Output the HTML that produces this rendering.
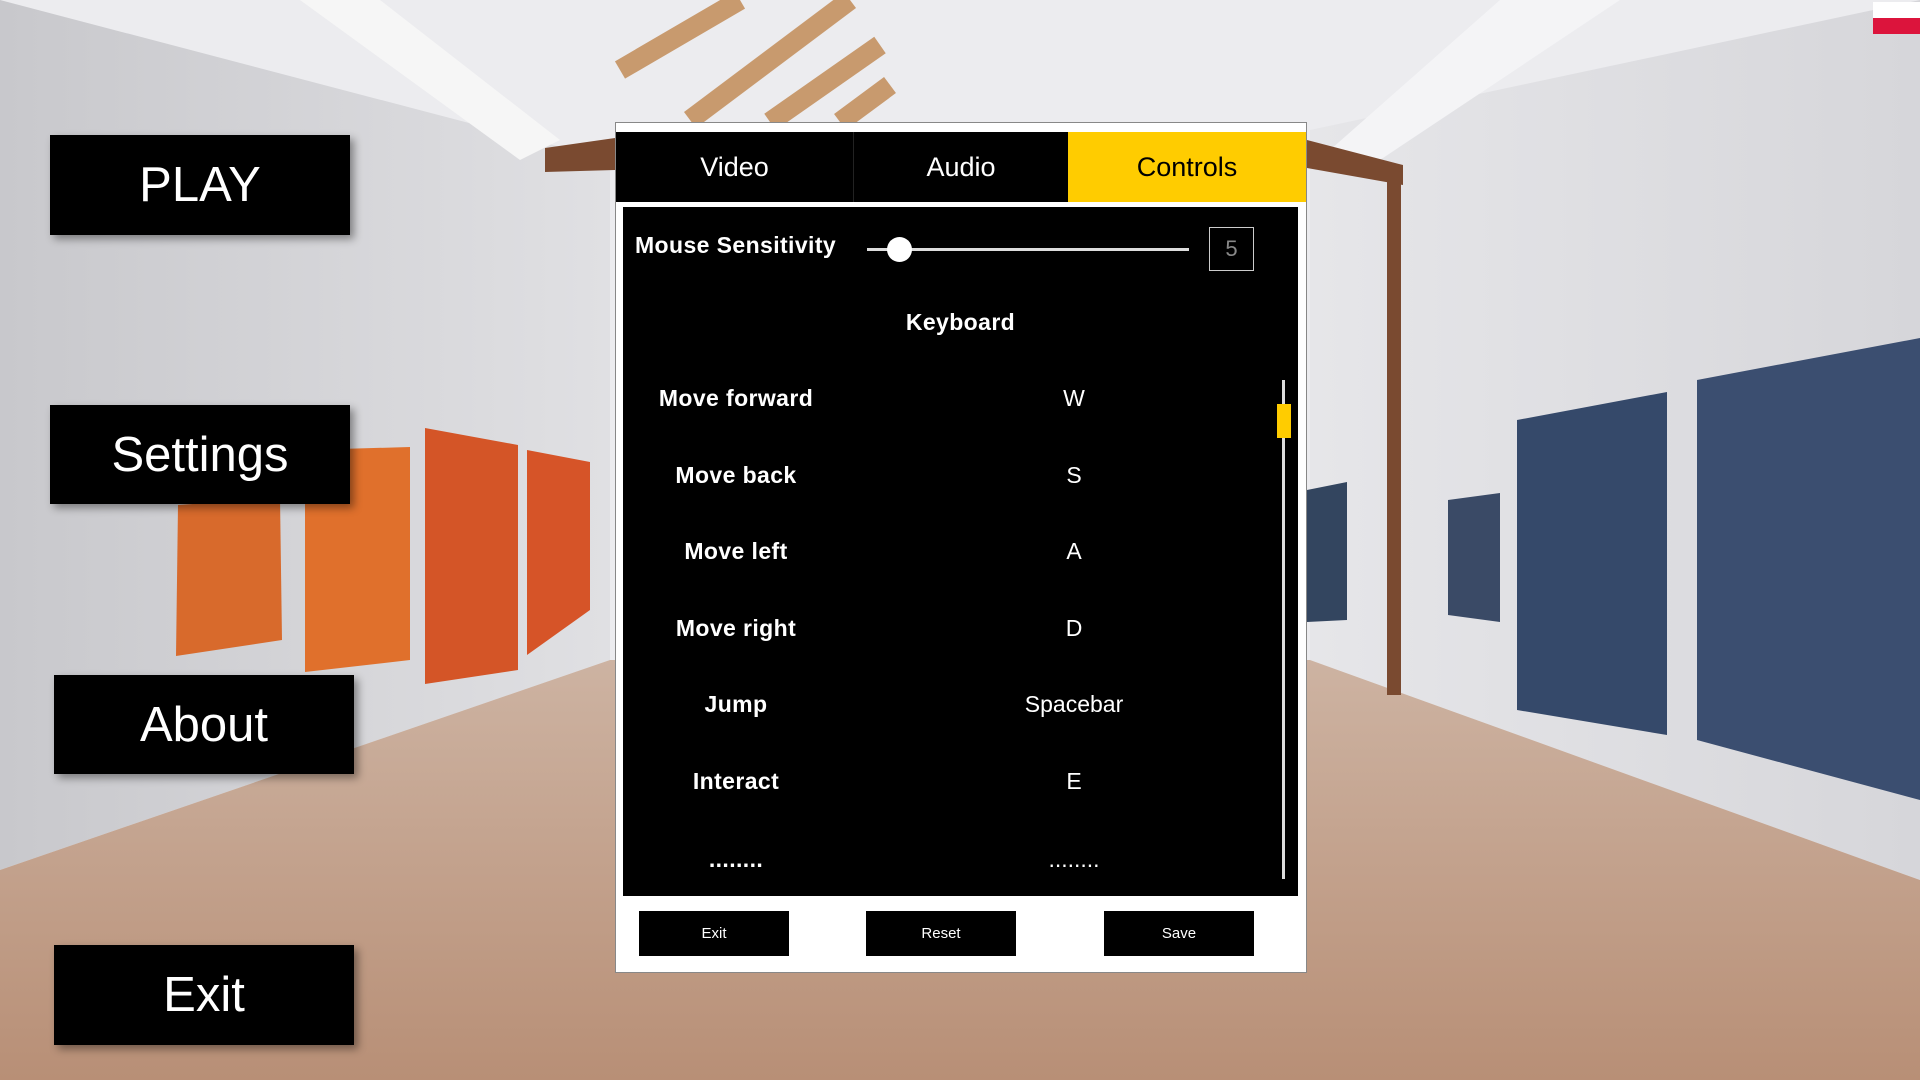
<!DOCTYPE html><html><head><style>
*{margin:0;padding:0;box-sizing:border-box}
body{width:1920px;height:1080px;overflow:hidden;position:relative;font-family:"Liberation Sans",sans-serif;background:#ddd}
.a{position:absolute}
.lb{position:absolute;background:#000;color:#fff;text-align:center;box-shadow:4px 4px 8px rgba(0,0,0,.4);font-size:49px;display:flex;align-items:center;justify-content:center}
.row{position:absolute;left:623px;width:660px;height:30px;color:#fff;font-size:23px}
.row span{position:absolute;top:0;transform:translateX(-50%);white-space:nowrap}
.k{left:113px;font-weight:bold;letter-spacing:.4px}.v{left:451px}
.bt{position:absolute;top:911px;height:45px;width:150px;background:#000;color:#fff;font-size:15px;display:flex;align-items:center;justify-content:center}
</style></head><body>
<svg class="a" style="left:0;top:0" width="1920" height="1080">
<defs>
<linearGradient id="fl" x1="0" y1="0" x2="0" y2="1"><stop offset="0" stop-color="#cdb3a2"/><stop offset="1" stop-color="#b88f76"/></linearGradient>
<linearGradient id="lw" x1="0" y1="0" x2="1" y2="0"><stop offset="0" stop-color="#c8c8cc"/><stop offset="1" stop-color="#e0e0e3"/></linearGradient>
<linearGradient id="rw" x1="0" y1="0" x2="1" y2="0"><stop offset="0" stop-color="#e6e6e9"/><stop offset="1" stop-color="#d6d6da"/></linearGradient>
</defs>
<rect width="1920" height="1080" fill="#ececef"/>
<polygon points="0,0 610,160 610,660 0,870" fill="url(#lw)"/>
<polygon points="1310,130 1920,0 1920,880 1310,660" fill="url(#rw)"/>
<polygon points="0,870 610,660 1310,660 1920,880 1920,1080 0,1080" fill="url(#fl)"/>
<polygon points="300,0 380,0 560,140 520,160" fill="#f6f6f6"/>
<g stroke="#c89a6e" stroke-width="20" stroke-linecap="butt">
<line x1="740" y1="0" x2="620" y2="70"/>
<line x1="850" y1="0" x2="690" y2="120"/>
<line x1="880" y1="45" x2="770" y2="122"/>
<line x1="890" y1="85" x2="840" y2="122"/>
</g>
<polygon points="1500,0 1620,0 1380,160 1330,150" fill="#f4f4f6"/>
<polygon points="545,148 615,138 615,170 545,172" fill="#7a4a30"/>
<polygon points="1307,140 1403,165 1403,185 1307,168" fill="#7a4a30"/>
<rect x="1387" y="165" width="14" height="530" fill="#7a4a30"/>
<polygon points="178,505 280,498 282,640 176,656" fill="#d86a2c"/>
<polygon points="305,450 410,447 410,660 305,672" fill="#e0702c"/>
<polygon points="425,428 518,445 518,670 425,684" fill="#d45527"/>
<polygon points="527,450 590,462 590,610 527,655" fill="#d65428"/>
<polygon points="1307,490 1347,482 1347,620 1307,622" fill="#33455f"/>
<polygon points="1448,500 1500,493 1500,622 1448,615" fill="#3a4a66"/>
<polygon points="1517,420 1667,392 1667,735 1517,710" fill="#35496a"/>
<polygon points="1697,380 1920,338 1920,800 1697,740" fill="#3b4e70"/>
<rect x="1873" y="2" width="47" height="16" fill="#fff"/>
<rect x="1873" y="18" width="47" height="16" fill="#dc143c"/>
</svg>

<div class="lb" style="left:50px;top:135px;width:300px;height:100px">PLAY</div>
<div class="lb" style="left:50px;top:405px;width:300px;height:99px">Settings</div>
<div class="lb" style="left:54px;top:675px;width:300px;height:99px">About</div>
<div class="lb" style="left:54px;top:945px;width:300px;height:100px">Exit</div>

<div class="a" style="left:615px;top:122px;width:692px;height:851px;background:#fff;border:1px solid #888"></div>
<div class="a" style="left:616px;top:132px;width:452px;height:70px;background:#000"></div>
<div class="a" style="left:616px;top:132px;width:237px;height:70px;color:#fff;font-size:27px;display:flex;align-items:center;justify-content:center">Video</div>
<div class="a" style="left:853px;top:132px;width:1px;height:70px;background:#222"></div>
<div class="a" style="left:854px;top:132px;width:214px;height:70px;color:#fff;font-size:27px;display:flex;align-items:center;justify-content:center">Audio</div>
<div class="a" style="left:1068px;top:132px;width:238px;height:70px;background:#ffcc00;color:#000;font-size:27px;display:flex;align-items:center;justify-content:center">Controls</div>
<div class="a" style="left:623px;top:207px;width:675px;height:689px;background:#000"></div>
<div class="a" style="left:635px;top:232px;color:#fff;font-weight:bold;font-size:23px;letter-spacing:.4px">Mouse Sensitivity</div>
<div class="a" style="left:867px;top:248px;width:322px;height:3px;background:#ddd"></div>
<div class="a" style="left:887px;top:237px;width:25px;height:25px;border-radius:50%;background:#fff"></div>
<div class="a" style="left:1209px;top:227px;width:45px;height:44px;border:1px solid #ccc;color:#888;font-size:22px;display:flex;align-items:center;justify-content:center">5</div>
<div class="a" style="left:623px;top:309px;width:675px;text-align:center;color:#fff;font-weight:bold;font-size:23px;letter-spacing:.4px">Keyboard</div>
<div class="row" style="top:385px"><span class="k">Move forward</span><span class="v">W</span></div>
<div class="row" style="top:462px"><span class="k">Move back</span><span class="v">S</span></div>
<div class="row" style="top:538px"><span class="k">Move left</span><span class="v">A</span></div>
<div class="row" style="top:615px"><span class="k">Move right</span><span class="v">D</span></div>
<div class="row" style="top:691px"><span class="k">Jump</span><span class="v">Spacebar</span></div>
<div class="row" style="top:768px"><span class="k">Interact</span><span class="v">E</span></div>
<div class="row" style="top:846px"><span class="k">........</span><span class="v">........</span></div>
<div class="a" style="left:1282px;top:380px;width:3px;height:499px;background:#ddd"></div>
<div class="a" style="left:1277px;top:404px;width:14px;height:34px;background:#ffcc00"></div>
<div class="bt" style="left:639px">Exit</div>
<div class="bt" style="left:866px">Reset</div>
<div class="bt" style="left:1104px">Save</div>
</body></html>
